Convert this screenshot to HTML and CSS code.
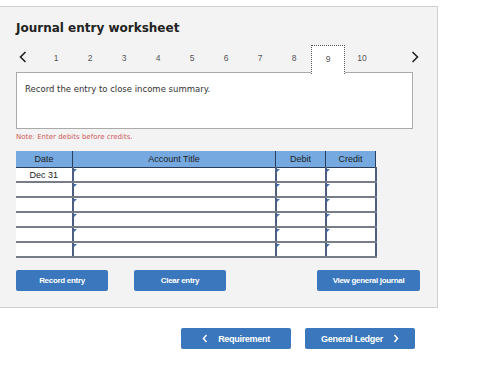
FILE: index.html
```html
<!DOCTYPE html>
<html lang="en">
<head>
    <meta charset="UTF-8">
    <title>Journal entry worksheet</title>
    <link rel="stylesheet" href="styles.css">
</head>
<body>
    <div class="panel">
        <h1>Journal entry worksheet</h1>

        <div class="tabs">
            <span class="arrow"><svg width="8" height="12" viewBox="0 0 8 12"><path d="M6.5 1 L1.5 6 L6.5 11" fill="none" stroke="#222" stroke-width="1.6"/></svg></span>
            <span class="tab">1</span>
            <span class="tab">2</span>
            <span class="tab">3</span>
            <span class="tab">4</span>
            <span class="tab">5</span>
            <span class="tab">6</span>
            <span class="tab">7</span>
            <span class="tab">8</span>
            <span class="tab active">9</span>
            <span class="tab">10</span>
            <span class="arrow right"><svg width="8" height="12" viewBox="0 0 8 12"><path d="M1.5 1 L6.5 6 L1.5 11" fill="none" stroke="#222" stroke-width="1.6"/></svg></span>
        </div>

        <div class="question">Record the entry to close income summary.</div>

        <p class="note">Note: Enter debits before credits.</p>

        <table class="journal">
            <tr>
                <th class="date">Date</th>
                <th class="title">Account Title</th>
                <th class="amount">Debit</th>
                <th class="amount">Credit</th>
            </tr>
            <tr>
                <td class="date">Dec 31</td>
                <td class="cell"></td>
                <td class="cell"></td>
                <td class="cell"></td>
            </tr>
            <tr><td class="date"></td><td class="cell"></td><td class="cell"></td><td class="cell"></td></tr>
            <tr><td class="date"></td><td class="cell"></td><td class="cell"></td><td class="cell"></td></tr>
            <tr><td class="date"></td><td class="cell"></td><td class="cell"></td><td class="cell"></td></tr>
            <tr><td class="date"></td><td class="cell"></td><td class="cell"></td><td class="cell"></td></tr>
            <tr><td class="date"></td><td class="cell"></td><td class="cell"></td><td class="cell"></td></tr>
        </table>

        <div class="actions">
            <button class="btn">Record entry</button>
            <button class="btn clear">Clear entry</button>
            <button class="btn view">View general journal</button>
        </div>
    </div>

    <div class="pager">
        <button class="btn nav"><svg class="chev" width="6" height="9" viewBox="0 0 6 9"><path d="M4.5 1 L1.5 4.5 L4.5 8" fill="none" stroke="#fff" stroke-width="1.5"/></svg>Requirement</button>
        <button class="btn nav">General Ledger<svg class="chev" width="6" height="9" viewBox="0 0 6 9"><path d="M1.5 1 L4.5 4.5 L1.5 8" fill="none" stroke="#fff" stroke-width="1.5"/></svg></button>
    </div>
</body>
</html>
```

FILE: styles.css
```css
body {
    margin: 0;
    font-family: "DejaVu Sans", Verdana, sans-serif;
    background: #ffffff;
    color: #222;
}
.panel {
    margin-top: 6px;
    width: 397px;
    height: 300px;
    padding: 0 24px 0 16px;
    background: #f3f3f3;
    border: 1px solid #cfcfcf;
    border-left: none;
}
h1 {
    margin: 0;
    padding-top: 14px;
    height: 24px;
    font-size: 12px;
    font-weight: bold;
    color: #222;
}
.tabs {
    display: flex;
    align-items: center;
    width: 403px;
    height: 28px;
    font-family: "Liberation Sans", Arial, sans-serif;
}
.arrow {
    width: 20px;
    padding-left: 3px;
    display: flex;
    margin-top: -4px;
}
.arrow.right {
    margin-left: auto;
    width: auto;
    padding: 0;
}
.tab {
    width: 34px;
    height: 28px;
    line-height: 26px;
    text-align: center;
    font-size: 8.5px;
    color: #555;
    box-sizing: border-box;
}
.tab.active {
    background: #ffffff;
    border: 1px dotted #555;
    border-bottom: none;
    position: relative;
    z-index: 1;
    height: 29px;
    margin-bottom: -1px;
}
.question {
    width: 397px;
    height: 57px;
    box-sizing: border-box;
    background: #ffffff;
    border: 1px solid #aaa;
    margin-top: -1px;
    padding: 11px 8px;
    font-size: 8.5px;
    color: #333;
}
.note {
    margin: 4px 0 10px;
    font-size: 7px;
    color: #d05a5a;
}
.journal {
    border-collapse: collapse;
    font-family: "Liberation Sans", Arial, sans-serif;
    font-size: 9px;
}
.journal th {
    height: 16px;
    padding: 0;
    background: #75a9e0;
    font-weight: normal;
    color: #222;
    border-left: 1px solid #2c3d5c;
    border-bottom: 1px solid #2c3d5c;
}
.journal th.date {
    border-left: none;
    width: 56px;
}
.journal th.title {
    width: 202px;
}
.journal th.amount {
    width: 49px;
}
.journal th:last-child {
    border-right: 1px solid #2c3d5c;
}
.journal td {
    height: 13px;
    padding: 0;
    background: #ffffff;
    border-bottom: 2px solid #777d88;
}
.journal td.date {
    text-align: center;
    vertical-align: top;
    padding-top: 2px;
    height: 11px;
    color: #222;
}
.journal td.cell {
    position: relative;
    border-left: 2px solid #4d5e80;
}
.journal td.cell:last-child {
    border-right: 2px solid #4d5e80;
}
.journal td.cell::before {
    content: "";
    position: absolute;
    left: 0;
    top: 1px;
    border-top: 3px solid #3d6fb5;
    border-right: 3px solid transparent;
}
.btn {
    display: inline-flex;
    align-items: center;
    justify-content: center;
    height: 21px;
    padding: 0;
    border: none;
    border-radius: 2px;
    background: #3a77bd;
    color: #ffffff;
    font-family: "Liberation Sans", Arial, sans-serif;
    font-weight: bold;
    font-size: 8px;
    letter-spacing: -0.3px;
}
.actions {
    display: flex;
    margin-top: 12px;
}
.actions .btn {
    width: 92px;
}
.actions .clear {
    margin-left: 26px;
}
.actions .view {
    margin-left: auto;
    width: 103px;
    margin-right: -7px;
}
.pager {
    display: flex;
    gap: 14px;
    margin: 20px 0 0 181px;
}
.btn.nav {
    width: 110px;
    font-size: 9px;
    gap: 10px;
}
```
